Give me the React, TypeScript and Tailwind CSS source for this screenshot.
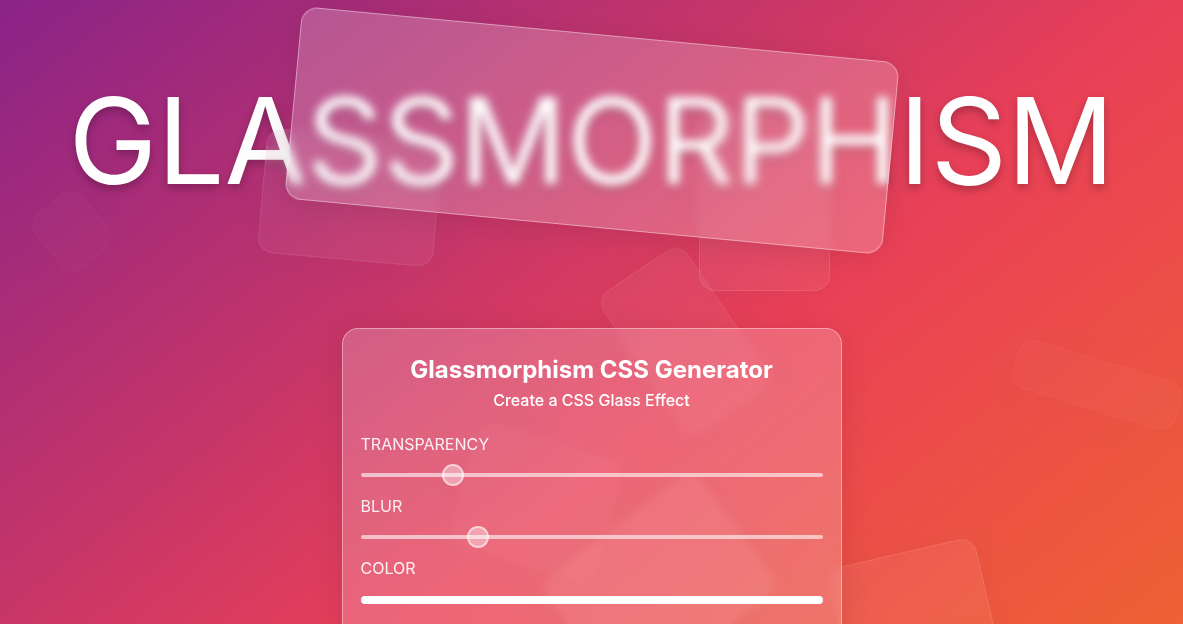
const shapes = [
  "left-[37px] top-[201px] h-[60px] w-[70px] rotate-49 opacity-7",
  "left-[262px] top-[135px] h-[125px] w-[176px] rotate-5 opacity-25",
  "left-[699px] top-[111px] h-[180px] w-[131px] opacity-30",
  "left-[600px] top-[290px] h-[102px] w-[170px] rotate-56 opacity-20",
  "left-[463px] top-[440px] h-[125px] w-[147px] rotate-15 opacity-15",
  "left-[587px] top-[490px] h-[191px] w-[145px] rotate-53 opacity-35",
  "left-[842px] top-[551px] size-[150px] -rotate-13 opacity-30",
  "left-[1012px] top-[360px] h-[50px] w-[170px] rotate-17 opacity-10",
];

const glass =
  "rounded-2xl border border-white/40 bg-white/20 shadow-[0_4px_30px_rgba(0,0,0,0.1)] backdrop-blur-[5px]";

const sliderTrack =
  "[&::-webkit-slider-runnable-track]:h-1 [&::-webkit-slider-runnable-track]:rounded-full [&::-webkit-slider-runnable-track]:bg-white/60";

const sliderThumb =
  "[&::-webkit-slider-thumb]:-mt-[9px] [&::-webkit-slider-thumb]:size-[22px] [&::-webkit-slider-thumb]:appearance-none [&::-webkit-slider-thumb]:rounded-full [&::-webkit-slider-thumb]:border-2 [&::-webkit-slider-thumb]:border-white/50 [&::-webkit-slider-thumb]:bg-white/40";

type RangeFieldProps = {
  id: string;
  label: string;
  max: number;
  step: number;
  value: number;
};

function RangeField({ id, label, max, step, value }: RangeFieldProps) {
  return (
    <div className="flex h-[62px] flex-col">
      <label htmlFor={id} className="leading-5 text-white/90">
        {label}
      </label>
      <input
        id={id}
        type="range"
        min={0}
        max={max}
        step={step}
        defaultValue={value}
        className={`mt-2.5 h-[22px] w-full cursor-pointer appearance-none bg-transparent ${sliderTrack} ${sliderThumb}`}
      />
    </div>
  );
}

export default function App() {
  return (
    <div className="h-screen overflow-hidden font-['Inter',sans-serif] text-white">
      <main className="relative min-h-[950px] overflow-hidden bg-[linear-gradient(to_bottom_right,#8a2387,#e94057,#f27121)]">
        <header className="relative flex h-[282px] items-center justify-center">
          <h1 className="text-[119px] leading-none whitespace-nowrap [text-shadow:0_4px_8px_rgba(0,0,0,0.25)]">
            GLASSMORPHISM
          </h1>
        </header>

        {shapes.map((shape) => (
          <div key={shape} aria-hidden="true" className={`absolute ${glass} ${shape}`} />
        ))}

        <div
          aria-hidden="true"
          className={`absolute top-[34px] left-1/2 h-[193px] w-[600px] -translate-x-1/2 rotate-[5.4deg] ${glass}`}
        />

        <section className={`relative mx-auto mt-[46px] min-h-[480px] max-w-[500px] px-[18px] pt-[25px] ${glass}`}>
          <h2 className="text-center text-2xl leading-8 font-bold">Glassmorphism CSS Generator</h2>
          <p className="text-center leading-7 font-medium">Create a CSS Glass Effect</p>
          <form className="mt-5">
            <RangeField id="transparency" label="TRANSPARENCY" max={1} step={0.005} value={0.185} />
            <RangeField id="blur" label="BLUR" max={20} step={0.05} value={4.85} />
            <div className="flex flex-col">
              <label htmlFor="color" className="leading-5 text-white/90">
                COLOR
              </label>
              <input
                id="color"
                type="color"
                defaultValue="#ffffff"
                className="mt-[18px] h-2 w-full cursor-pointer appearance-none overflow-hidden rounded-full bg-white p-0 [&::-webkit-color-swatch]:border-0 [&::-webkit-color-swatch-wrapper]:p-0"
              />
            </div>
          </form>
        </section>
      </main>
    </div>
  );
}
